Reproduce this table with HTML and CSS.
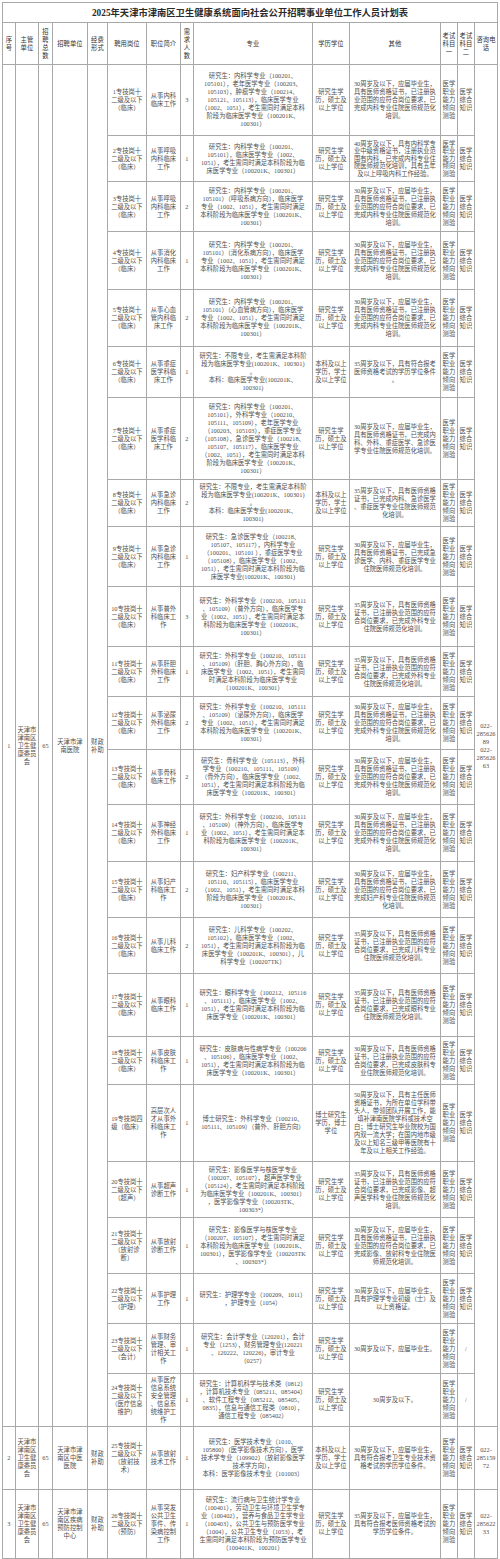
FILE: index.html
```html
<!DOCTYPE html>
<html lang="zh-CN">
<head>
<meta charset="utf-8">
<title>2025年天津市津南区卫生健康系统面向社会公开招聘事业单位工作人员计划表</title>
<link rel="stylesheet" href="styles.css">
</head>
<body>
<table class="sheet">
<colgroup>
<col class="c-no"><col class="c-dept"><col class="c-total"><col class="c-unit"><col class="c-fund"><col class="c-post"><col class="c-desc"><col class="c-num"><col class="c-major"><col class="c-edu"><col class="c-other"><col class="c-ex1"><col class="c-ex2"><col class="c-tel">
</colgroup>
<tbody>
<tr class="title"><td colspan="14">2025年天津市津南区卫生健康系统面向社会公开招聘事业单位工作人员计划表</td></tr>
<tr class="head">
<td>序<br>号</td><td>主管<br>单位</td><td>招<br>聘<br>总<br>数</td><td>招聘单位</td><td>经费<br>形式</td><td>聘用岗位</td><td>职位简介</td><td>需<br>求<br>人<br>数</td><td>专业</td><td>学历学位</td><td>其他</td><td>考试<br>科目<br>一</td><td>考试<br>科目<br>二</td><td>咨询电<br>话</td>
</tr>

<tr class="r71">
<td rowspan="24">1</td>
<td rowspan="24">天津市<br>津南区<br>卫生健<br>康委员<br>会</td>
<td rowspan="24">65</td>
<td rowspan="24">天津市津<br>南医院</td>
<td rowspan="24">财政<br>补助</td>
<td>1专技岗十<br>二级及以下<br>（临床）</td><td>从事内科<br>临床工作</td><td>3</td>
<td>研究生：内科学专业（100201、<br>105101），老年医学专业（100203、<br>105103），肿瘤学专业（100214、<br>105121、105113），临床医学专业<br>（1002、1051），考生需同时满足本科<br>阶段为临床医学专业（100201K、<br>100301）</td>
<td>研究生学<br>历，硕士及<br>以上学位</td>
<td>30周岁及以下，应届毕业生，<br>具有医师资格证书，已注册执<br>业范围的应符合岗位要求，已<br>完成内科专业住院医师规范化<br>培训。</td>
<td>医学<br>职业<br>能力<br>倾向<br>测验</td><td>医学<br>综合<br>知识</td>
<td rowspan="24">022-<br>285626<br>89<br>022-<br>285626<br>63</td>
</tr>

<tr class="r46">
<td>2专技岗十<br>二级及以下<br>（临床）</td><td>从事呼吸<br>内科临床<br>工作</td><td>1</td>
<td>研究生：内科学专业（100201、<br>105101），临床医学专业（1002、<br>1051），考生需同时满足本科阶段为临<br>床医学专业（100201K、100301）</td>
<td>研究生学<br>历，硕士及<br>以上学位</td>
<td class="tight">40周岁及以下，具有内科学专<br>业中级资格证书，注册执业范<br>围有内科，已完成内科专业住<br>院医师规范化培训，具有五年<br>及以上呼吸内科工作经验。</td>
<td class="tight">医学<br>职业<br>能力<br>倾向<br>测验</td><td>医学<br>综合<br>知识</td>
</tr>

<tr class="r50">
<td>3专技岗十<br>二级及以下<br>（临床）</td><td>从事呼吸<br>内科临床<br>工作</td><td>2</td>
<td>研究生：内科学专业（100201、<br>105101）（呼吸系病方向），临床医学<br>专业（1002、1051），考生需同时满足<br>本科阶段为临床医学专业（100201K、<br>100301）</td>
<td>研究生学<br>历，硕士及<br>以上学位</td>
<td>30周岁及以下，应届毕业生，<br>具有医师资格证书，已注册执<br>业范围的应符合岗位要求，已<br>完成内科专业住院医师规范化<br>培训。</td>
<td>医学<br>职业<br>能力<br>倾向<br>测验</td><td>医学<br>综合<br>知识</td>
</tr>

<tr class="r58">
<td>4专技岗十<br>二级及以下<br>（临床）</td><td>从事消化<br>内科临床<br>工作</td><td>1</td>
<td>研究生：内科学专业（100201、<br>105101）（消化系病方向），临床医学<br>专业（1002、1051），考生需同时满足<br>本科阶段为临床医学专业（100201K、<br>100301）</td>
<td>研究生学<br>历，硕士及<br>以上学位</td>
<td>30周岁及以下，应届毕业生，<br>具有医师资格证书，已注册执<br>业范围的应符合岗位要求，已<br>完成内科专业住院医师规范化<br>培训。</td>
<td>医学<br>职业<br>能力<br>倾向<br>测验</td><td>医学<br>综合<br>知识</td>
</tr>

<tr class="r57">
<td>5专技岗十<br>二级及以下<br>（临床）</td><td>从事心血<br>管内科临<br>床工作</td><td>2</td>
<td>研究生：内科学专业（100201、<br>105101）（心血管病方向），临床医学<br>专业（1002、1051），考生需同时满足<br>本科阶段为临床医学专业（100201K、<br>100301）</td>
<td>研究生学<br>历，硕士及<br>以上学位</td>
<td>30周岁及以下，应届毕业生，<br>具有医师资格证书，已注册执<br>业范围的应符合岗位要求，已<br>完成内科专业住院医师规范化<br>培训。</td>
<td>医学<br>职业<br>能力<br>倾向<br>测验</td><td>医学<br>综合<br>知识</td>
</tr>

<tr class="r51">
<td>6专技岗十<br>二级及以下<br>（临床）</td><td>从事重症<br>医学科临<br>床工作</td><td>1</td>
<td>研究生：不限专业，考生需满足本科阶<br>段为临床医学专业(100201K、100301)<br>。<br>本科：临床医学专业(100201K、<br>100301)</td>
<td>本科及以上<br>学历，学士<br>及以上学位</td>
<td>35周岁及以下，具有符合报考<br>医师资格考试的学历学位条件<br>。</td>
<td>医学<br>职业<br>能力<br>倾向<br>测验</td><td>医学<br>综合<br>知识</td>
</tr>

<tr class="r82">
<td>7专技岗十<br>二级及以下<br>（临床）</td><td>从事重症<br>医学科临<br>床工作</td><td>2</td>
<td>研究生：内科学专业（100201、<br>105101），外科学专业（100210、<br>105111、105109），老年医学专业<br>（100203、105103），重症医学专业<br>（105108），急诊医学专业（100218、<br>105107、105117），临床医学专业<br>（1002、1051），考生需同时满足本科<br>阶段为临床医学专业（100201K、<br>100301）</td>
<td>研究生学<br>历，硕士及<br>以上学位</td>
<td>30周岁及以下，应届毕业生，<br>具有医师资格证书，已完成内<br>科、外科、重症医学、急诊医<br>学专业住院医师规范化培训。</td>
<td>医学<br>职业<br>能力<br>倾向<br>测验</td><td>医学<br>综合<br>知识</td>
</tr>

<tr class="r47">
<td>8专技岗十<br>二级及以下<br>（临床）</td><td>从事急诊<br>内科临床<br>工作</td><td>2</td>
<td>研究生：不限专业，考生需满足本科阶<br>段为临床医学专业(100201K、100301)<br>。<br>本科：临床医学专业(100201K、<br>100301)</td>
<td>本科及以上<br>学历，学士<br>及以上学位</td>
<td>35周岁及以下，具有医师资格<br>证书，已完成内科、急诊医学<br>、重症医学专业住院医师规范<br>化培训。</td>
<td>医学<br>职业<br>能力<br>倾向<br>测验</td><td>医学<br>综合<br>知识</td>
</tr>

<tr class="r60">
<td>9专技岗十<br>二级及以下<br>（临床）</td><td>从事急诊<br>内科临床<br>工作</td><td>1</td>
<td>研究生：急诊医学专业（100218、<br>105107、105117），内科学专业<br>（100201、105101 ），重症医学专业<br>（105108），临床医学专业（1002、<br>1051），考生需同时满足本科阶段为临<br>床医学专业(100201K、100301)</td>
<td>研究生学<br>历，硕士及<br>以上学位</td>
<td>30周岁及以下，应届毕业生，<br>具有医师资格证书，已完成急<br>诊医学、内科、重症医学专业<br>住院医师规范化培训。</td>
<td>医学<br>职业<br>能力<br>倾向<br>测验</td><td>医学<br>综合<br>知识</td>
</tr>

<tr class="r60">
<td>10专技岗十<br>二级及以下<br>（临床）</td><td>从事普外<br>科临床工<br>作</td><td>3</td>
<td>研究生：外科学专业（100210、105111<br>、105109）（普外方向），临床医学专<br>业（1002、1051），考生需同时满足本<br>科阶段为临床医学专业（100201K、<br>100301）</td>
<td>研究生学<br>历，硕士及<br>以上学位</td>
<td>35周岁及以下，具有医师资格<br>证书，已注册执业范围的应符<br>合岗位要求，已完成外科专业<br>住院医师规范化培训。</td>
<td>医学<br>职业<br>能力<br>倾向<br>测验</td><td>医学<br>综合<br>知识</td>
</tr>

<tr class="r50">
<td>11专技岗十<br>二级及以下<br>（临床）</td><td>从事肝胆<br>外科临床<br>工作</td><td>1</td>
<td>研究生：外科学专业（100210、105111<br>、105109）（肝胆、胸心外方向），临<br>床医学专业（1002、1051），考生需同<br>时满足本科阶段为临床医学专业<br>（100201K、100301）</td>
<td>研究生学<br>历，硕士及<br>以上学位</td>
<td>35周岁及以下，具有医师资格<br>证书，已注册执业范围的应符<br>合岗位要求，已完成外科专业<br>住院医师规范化培训。</td>
<td>医学<br>职业<br>能力<br>倾向<br>测验</td><td>医学<br>综合<br>知识</td>
</tr>

<tr class="r53">
<td>12专技岗十<br>二级及以下<br>（临床）</td><td>从事泌尿<br>外科临床<br>工作</td><td>2</td>
<td>研究生：外科学专业（100210、105111<br>、105109）（泌尿外方向），临床医学<br>专业（1002、1051），考生需同时满足<br>本科阶段为临床医学专业（100201K、<br>100301）</td>
<td>研究生学<br>历，硕士及<br>以上学位</td>
<td>30周岁及以下，应届毕业生，<br>具有医师资格证书，已注册执<br>业范围的应符合岗位要求，已<br>完成外科专业住院医师规范化<br>培训。</td>
<td>医学<br>职业<br>能力<br>倾向<br>测验</td><td>医学<br>综合<br>知识</td>
</tr>

<tr class="r55">
<td>13专技岗十<br>二级及以下<br>（临床）</td><td>从事骨科<br>临床工作</td><td>2</td>
<td>研究生：骨科学专业（105113），外科<br>学专业（100210、105111、105109）<br>（骨外方向），临床医学专业（1002、<br>1051），考生需同时满足本科阶段为临<br>床医学专业（100201K、100301）</td>
<td>研究生学<br>历，硕士及<br>以上学位</td>
<td>30周岁及以下，应届毕业生，<br>具有医师资格证书，已注册执<br>业范围的应符合岗位要求，已<br>完成外科专业住院医师规范化<br>培训。</td>
<td>医学<br>职业<br>能力<br>倾向<br>测验</td><td>医学<br>综合<br>知识</td>
</tr>

<tr class="r57">
<td>14专技岗十<br>二级及以下<br>（临床）</td><td>从事神经<br>外科临床<br>工作</td><td>1</td>
<td>研究生：外科学专业（100210、105111<br>、105109）（神外方向），临床医学专<br>业（1002、1051），考生需同时满足本<br>科阶段为临床医学专业（100201K、<br>100301）</td>
<td>研究生学<br>历，硕士及<br>以上学位</td>
<td>30周岁及以下，应届毕业生，<br>具有医师资格证书，已注册执<br>业范围的应符合岗位要求，已<br>完成外科专业住院医师规范化<br>培训。</td>
<td>医学<br>职业<br>能力<br>倾向<br>测验</td><td>医学<br>综合<br>知识</td>
</tr>

<tr class="r56">
<td>15专技岗十<br>二级及以下<br>（临床）</td><td>从事妇产<br>科临床工<br>作</td><td>2</td>
<td>研究生：妇产科学专业（100211、<br>105110、105115），临床医学专业<br>（1002、1051），考生需同时满足本科<br>阶段为临床医学专业（100201K、<br>100301）</td>
<td>研究生学<br>历，硕士及<br>以上学位</td>
<td>30周岁及以下，应届毕业生，<br>具有医师资格证书，已注册执<br>业范围的应符合岗位要求，已<br>完成妇产科专业住院医师规范<br>化培训。</td>
<td>医学<br>职业<br>能力<br>倾向<br>测验</td><td>医学<br>综合<br>知识</td>
</tr>

<tr class="r56">
<td>16专技岗十<br>二级及以下<br>（临床）</td><td>从事儿科<br>临床工作</td><td>2</td>
<td>研究生：儿科学专业（100202、<br>105102），临床医学专业（1002、<br>1051），考生需同时满足本科阶段为临<br>床医学专业（100201K、100301），儿<br>科学专业（100207TK）</td>
<td>研究生学<br>历，硕士及<br>以上学位</td>
<td>35周岁及以下，具有医师资格<br>证书，已注册执业范围的应符<br>合岗位要求，已完成儿科专业<br>住院医师规范化培训。</td>
<td>医学<br>职业<br>能力<br>倾向<br>测验</td><td>医学<br>综合<br>知识</td>
</tr>

<tr class="r63">
<td>17专技岗十<br>二级及以下<br>（临床）</td><td>从事眼科<br>临床工作</td><td>1</td>
<td>研究生：眼科学专业（100212、105116<br>、105111），临床医学专业（1002、<br>1051），考生需同时满足本科阶段为临<br>床医学专业（100201K、100301）</td>
<td>研究生学<br>历，硕士及<br>以上学位</td>
<td>35周岁及以下，具有医师资格<br>证书，已注册执业范围的应符<br>合岗位要求，已完成眼科专业<br>住院医师规范化培训。</td>
<td>医学<br>职业<br>能力<br>倾向<br>测验</td><td>医学<br>综合<br>知识</td>
</tr>

<tr class="r48">
<td>18专技岗十<br>二级及以下<br>（临床）</td><td>从事皮肤<br>科临床工<br>作</td><td>1</td>
<td>研究生：皮肤病与性病学专业（100206<br>、105106），临床医学专业（1002、<br>1051），考生需同时满足本科阶段为临<br>床医学专业（100201K、100301）</td>
<td>研究生学<br>历，硕士及<br>以上学位</td>
<td>30周岁及以下，具有医师资格<br>证书，已注册执业范围的应符<br>合岗位要求，已完成皮肤科专<br>业住院医师规范化培训。</td>
<td>医学<br>职业<br>能力<br>倾向<br>测验</td><td>医学<br>综合<br>知识</td>
</tr>

<tr class="r77">
<td>19专技岗四<br>级（临床）</td><td>高层次人<br>才从事外<br>科临床工<br>作</td><td>1</td>
<td>博士研究生：外科学专业（100210、<br>105111、105109）（普外、肝胆方向）</td>
<td>博士研究生<br>学历，博士<br>学位</td>
<td>50周岁及以下，具有主任医师<br>资格证书，为所在单位学科带<br>头人，带领团队开展工作，能<br>填补津南医院学科或技术空<br>白；博士研究生毕业院校为国<br>内双一流大学；在国内地市级<br>及以上知名三级甲等医院有十<br>年及以上相关工作经验。</td>
<td>医学<br>职业<br>能力<br>倾向<br>测验</td><td>医学<br>综合<br>知识</td>
</tr>

<tr class="r56">
<td>20专技岗十<br>二级及以下<br>（超声）</td><td>从事超声<br>诊断工作</td><td>1</td>
<td>研究生：影像医学与核医学专业<br>（100207、105107），超声医学专业<br>（105124），考生需同时满足本科阶段<br>为临床医学专业（100201K、100301）<br>，医学影像学专业（100203TK、<br>100303*）</td>
<td>研究生学<br>历，硕士及<br>以上学位</td>
<td>35周岁及以下，具有医师资格<br>证书，已注册执业范围的应符<br>合岗位要求，已完成影像、超<br>声医学科专业住院医师规范化<br>培训。</td>
<td>医学<br>职业<br>能力<br>倾向<br>测验</td><td>医学<br>综合<br>知识</td>
</tr>

<tr class="r56">
<td>21专技岗十<br>二级及以下<br>（放射诊<br>断）</td><td>从事放射<br>诊断工作</td><td>1</td>
<td>研究生：影像医学与核医学专业<br>（100207、105107），考生需同时满足<br>本科阶段为临床医学专业（100201K、<br>100301），医学影像学专业（100203TK<br>、100303*）</td>
<td>研究生学<br>历，硕士及<br>以上学位</td>
<td>30周岁及以下，应届毕业生，<br>具有医师资格证书，已注册执<br>业范围的应符合岗位要求，已<br>完成影像、放射科专业住院医<br>师规范化培训。</td>
<td>医学<br>职业<br>能力<br>倾向<br>测验</td><td>医学<br>综合<br>知识</td>
</tr>

<tr class="r50">
<td>22专技岗十<br>二级及以下<br>（护理）</td><td>从事护理<br>工作</td><td>1</td>
<td>研究生：护理学专业（100209、1011）<br>，护理专业（1054）</td>
<td>研究生学<br>历，硕士及<br>以上学位</td>
<td>30周岁及以下，应届毕业生，<br>具有护理学专业初级（士）及<br>以上资格证。</td>
<td>医学<br>职业<br>能力<br>倾向<br>测验</td><td>医学<br>综合<br>知识</td>
</tr>

<tr class="r50">
<td>23专技岗十<br>二级及以下<br>（会计）</td><td>从事财务<br>管理、审<br>计相关工<br>作</td><td>1</td>
<td>研究生：会计学专业（120201），会计<br>专业（1253），财务管理专业(120221<br>、120222、120226)，审计专业<br>（0257）</td>
<td>研究生学<br>历，硕士及<br>以上学位</td>
<td>30周岁及以下，应届毕业生。</td>
<td>医学<br>职业<br>能力<br>倾向<br>测验</td><td>/</td>
</tr>

<tr class="r53">
<td>24专技岗十<br>二级及以下<br>（医疗信息<br>维护）</td><td>从事医疗<br>信息系统<br>安全管理<br>、信息系<br>统维护工<br>作</td><td>1</td>
<td>研究生：计算机科学与技术类（0812）<br>，计算机技术专业（085211、085404）<br>、软件工程专业（085212、085405、<br>0835），信息与通信工程类（0810），<br>通信工程专业（085402）</td>
<td>研究生学<br>历，硕士及<br>以上学位</td>
<td>30周岁及以下。</td>
<td>医学<br>职业<br>能力<br>倾向<br>测验</td><td>/</td>
</tr>

<tr class="r63">
<td>2</td>
<td>天津市<br>津南区<br>卫生健<br>康委员<br>会</td>
<td>65</td>
<td>天津市津<br>南区中医<br>医院</td>
<td>财政<br>补助</td>
<td>25专技岗十<br>二级及以下<br>（放射技<br>术）</td><td>从事放射<br>技术工作</td><td>1</td>
<td>研究生：医学技术专业（1010、<br>105800）（医学影像技术方向），医学<br>技术学专业（109902）（放射影像医学<br>技术学方向），<br>本科：医学影像技术专业（101003）</td>
<td>本科及以上<br>学历，学士<br>及以上学位</td>
<td>30周岁及以下，应届毕业生，<br>具有符合报考卫生专业技术资<br>格考试的学历学位条件。</td>
<td>医学<br>职业<br>能力<br>倾向<br>测验</td><td>医学<br>综合<br>知识</td>
<td>022-<br>285159<br>72</td>
</tr>

<tr class="r69">
<td>3</td>
<td>天津市<br>津南区<br>卫生健<br>康委员<br>会</td>
<td>65</td>
<td>天津市津<br>南区疾病<br>预防控制<br>中心</td>
<td>财政<br>补助</td>
<td>26专技岗十<br>二级及以下<br>（预防）</td><td>从事突发<br>公共卫生<br>事件、传<br>染病控制<br>工作</td><td>1</td>
<td>研究生：流行病与卫生统计学专业<br>（100401），劳动卫生与环境卫生学专<br>业（100402），营养与食品卫生学专业<br>（100403），公共卫生与预防医学专业<br>（1004），公共卫生专业（1053），考<br>生需同时满足本科阶段为预防医学专业<br>（100401K、100201）</td>
<td>研究生学<br>历，硕士及<br>以上学位</td>
<td>35周岁及以下，应届毕业生，<br>具有符合报考医师资格考试的<br>学历学位条件。</td>
<td>医学<br>职业<br>能力<br>倾向<br>测验</td><td>医学<br>综合<br>知识</td>
<td>022-<br>285622<br>33</td>
</tr>
</tbody>
</table>
</body>
</html>
```

FILE: styles.css
```css
html, body {
  margin: 0;
  padding: 0;
  background: #ffffff;
}

body {
  font-family: "Liberation Serif", "Noto Sans CJK SC", serif;
  color: #505050;
}

.sheet {
  width: 495px;
  margin: 2px auto 0;
  border-collapse: collapse;
  table-layout: fixed;
}

.sheet td {
  border: 1px solid #a8a8a8;
  padding: 0 1px;
  text-align: center;
  vertical-align: middle;
  font-size: 6.3px;
  line-height: 8px;
  overflow: hidden;
  word-break: break-all;
}

.c-no { width: 13px; }
.c-dept { width: 23px; }
.c-total { width: 14px; }
.c-unit { width: 35px; }
.c-fund { width: 20px; }
.c-post { width: 39px; }
.c-desc { width: 34px; }
.c-num { width: 13px; }
.c-major { width: 119px; }
.c-edu { width: 37px; }
.c-other { width: 91px; }
.c-ex1 { width: 17px; }
.c-ex2 { width: 17px; }
.c-tel { width: 23px; }

.title td {
  height: 19px;
  font-size: 9.3px;
  line-height: 12px;
  font-weight: 700;
  color: #2a2a2a;
}

.head td {
  height: 41px;
  color: #333333;
}

.sheet td.tight {
  line-height: 7.6px;
}

.r46 { height: 46px; }
.r47 { height: 47px; }
.r48 { height: 48px; }
.r50 { height: 50px; }
.r51 { height: 51px; }
.r53 { height: 53px; }
.r55 { height: 55px; }
.r56 { height: 56px; }
.r57 { height: 57px; }
.r58 { height: 58px; }
.r60 { height: 60px; }
.r63 { height: 63px; }
.r69 { height: 69px; }
.r71 { height: 71px; }
.r77 { height: 77px; }
.r82 { height: 82px; }
```
